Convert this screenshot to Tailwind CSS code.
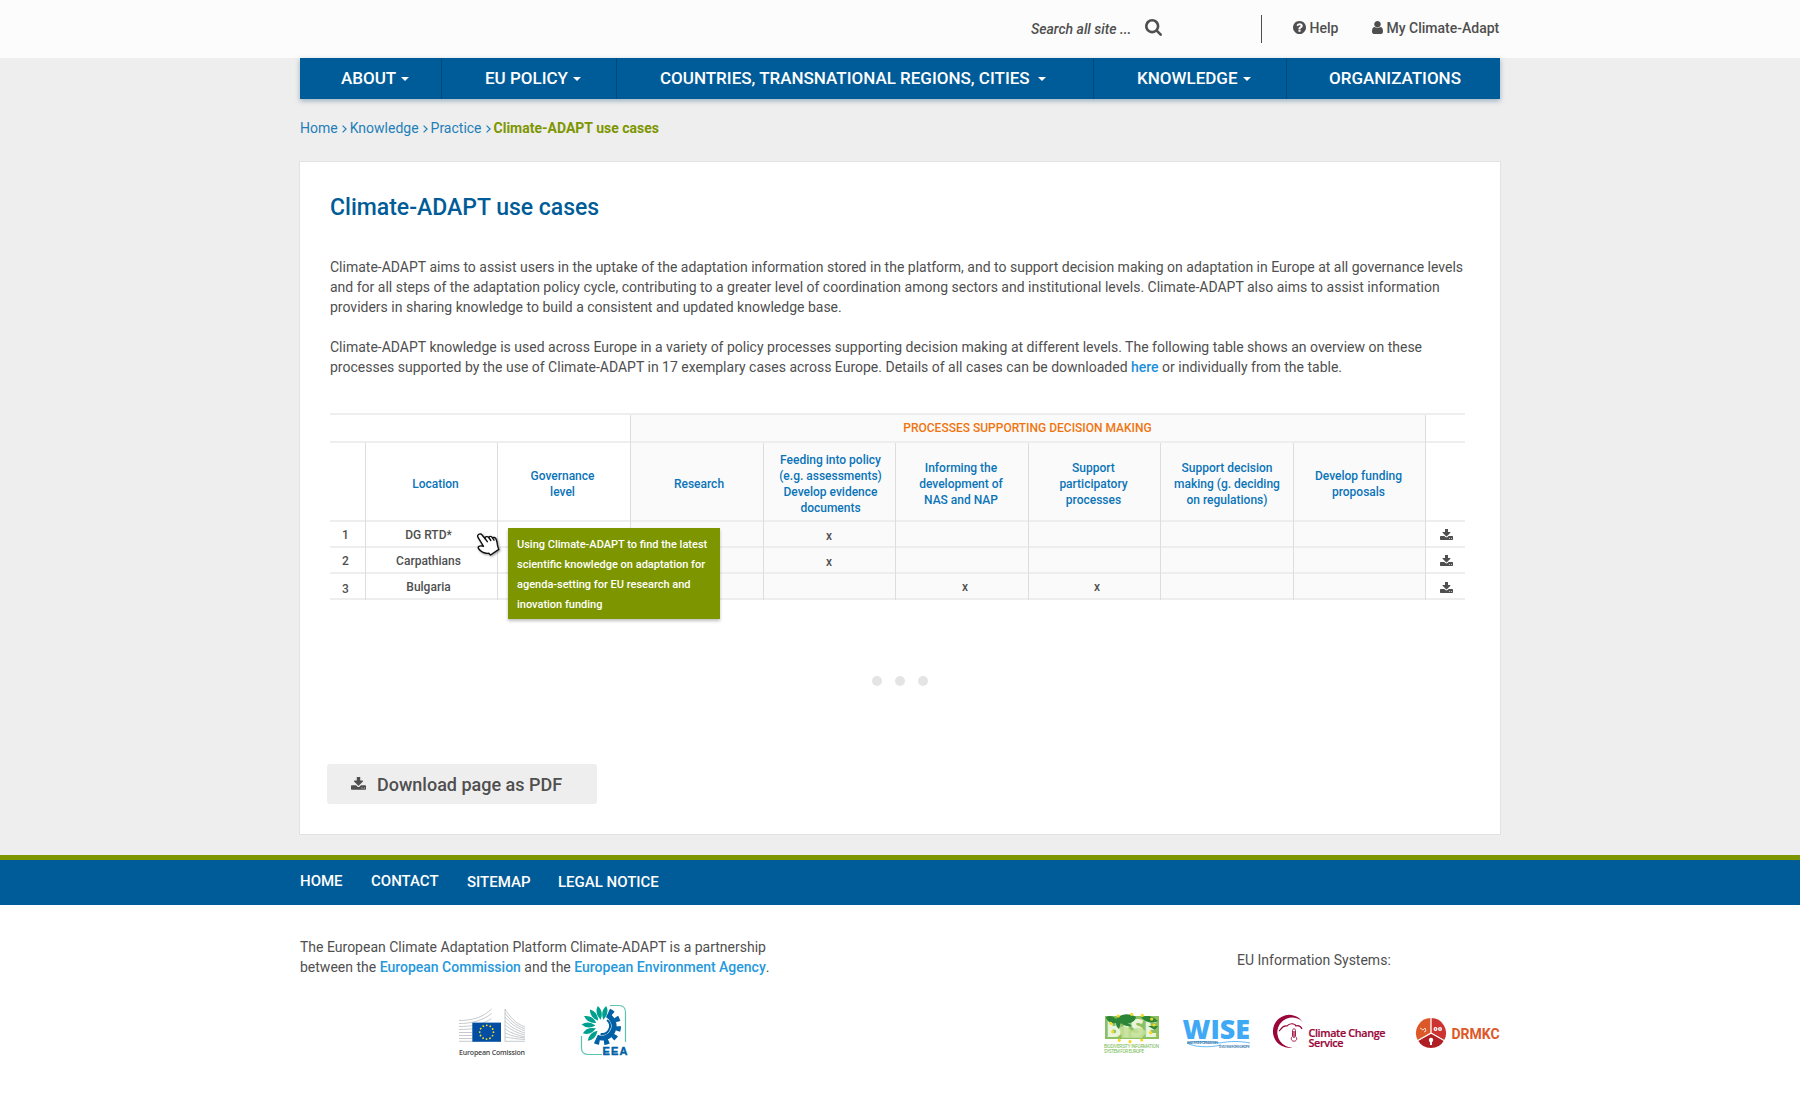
<!DOCTYPE html>
<html lang="en">
<head>
<meta charset="utf-8">
<title>Climate-ADAPT use cases</title>
<script src="https://cdn.jsdelivr.net/npm/@tailwindcss/browser@4"></script>
</head>
<body class="w-[1800px] overflow-x-hidden bg-white font-[Roboto,sans-serif] text-sm text-[#4f4f4f]">
<svg class="hidden">
  <symbol id="download" viewBox="64 128 1664 1536"><path d="M1344 1344q0-26-19-45t-45-19-45 19-19 45 19 45 45 19 45-19 19-45zm256 0q0-26-19-45t-45-19-45 19-19 45 19 45 45 19 45-19 19-45zm128-224v320q0 40-28 68t-68 28h-1472q-40 0-68-28t-28-68v-320q0-40 28-68t68-28h465l135 136q58 56 136 56t136-56l136-136h464q40 0 68 28t28 68zm-325-569q17 41-14 70l-448 448q-18 19-45 19t-45-19l-448-448q-31-29-14-70 17-39 59-39h256v-448q0-26 19-45t45-19h256q26 0 45 19t19 45v448h256q42 0 59 39z"/></symbol>
</svg>

<header class="flex h-[58px] bg-[#fcfcfc]">
  <div class="mx-auto flex w-[1200px] justify-end font-medium">
    <div class="flex w-[230px] pt-[19px]">
      <span class="w-[114px] italic leading-5">Search all site ...</span>
      <svg class="h-[17px] w-[17px]" viewBox="0 128 1664 1664" fill="currentColor"><path d="M1152 832q0-185-131.500-316.500t-316.500-131.500-316.500 131.500-131.500 316.500 131.500 316.500 316.500 131.500 316.500-131.500 131.500-316.500zm512 832q0 52-38 90t-90 38q-54 0-90-38l-343-342q-179 124-399 124-143 0-273.500-55.500t-225-150-150-225-55.500-273.500 55.500-273.500 150-225 225-150 273.500-55.500 273.500 55.500 225 150 150 225 55.500 273.500q0 220-124 399l343 343q37 37 37 90z"/></svg>
    </div>
    <div class="mt-[15px] h-7 w-px bg-[#4f4f4f]"></div>
    <div class="flex w-[110px] pl-[31px] pt-[18px] leading-5">
      <svg class="mt-[3px] mr-[3.500px] h-[13px] w-[13px]" viewBox="128 128 1536 1536" fill="currentColor"><path d="M1024 1376v-192q0-14-9-23t-23-9h-192q-14 0-23 9t-9 23v192q0 14 9 23t23 9h192q14 0 23-9t9-23zm256-672q0-88-55.500-163t-138.500-116-170-41q-243 0-371 213-15 24 8 42l132 100q7 6 19 6 16 0 25-12 53-68 86-92 34-24 86-24 48 0 85.500 26t37.500 59q0 38-20 61t-68 45q-63 28-115.500 86.500t-52.500 125.500v36q0 14 9 23t23 9h192q14 0 23-9t9-23q0-19 21.500-49.500t54.500-49.500q32-18 49-28.500t46-35 44.500-48 28-60.500 12.500-81zm384 192q0 209-103 385.500t-279.500 279.500-385.500 103-385.500-103-279.500-279.500-103-385.500 103-385.500 279.500-279.500 385.500-103 385.500 103 279.500 279.500 103 385.500z"/></svg>
      <span>Help</span>
    </div>
    <div class="flex w-[128px] pt-[18px] leading-5">
      <svg class="mt-[3px] mr-[3.500px] h-[13px] w-[11px]" viewBox="256 128 1280 1536" fill="currentColor" preserveAspectRatio="none"><path d="M1536 1399q0 109-62.500 187t-150.500 78h-854q-88 0-150.500-78t-62.500-187q0-85 8.500-160.500t31.500-152 58.500-131 94-89 134.500-34.500q131 128 313 128t313-128q76 0 134.500 34.500t94 89 58.500 131 31.500 152 8.500 160.500zm-256-887q0 159-112.500 271.500t-271.500 112.500-271.500-112.500-112.500-271.500 112.500-271.500 271.500-112.500 271.500 112.500 112.500 271.500z"/></svg>
      <span class="whitespace-nowrap">My Climate-Adapt</span>
    </div>
  </div>
</header>

<main class="h-[797px] bg-[#eeeeee]">
  <nav class="mx-auto flex h-[41px] w-[1200px] bg-[#005c98] text-[17px] font-medium leading-[41px] text-white shadow-[0_2px_5px_rgba(0,60,100,0.35)]">
    <a class="flex w-[142px] items-center border-r border-[#004878] pl-[41px]">ABOUT<i class="ml-[5px] border-x-4 border-t-4 border-x-transparent"></i></a>
    <a class="flex w-[175px] items-center border-r border-[#004878] pl-[43px]">EU POLICY<i class="ml-[5px] border-x-4 border-t-4 border-x-transparent"></i></a>
    <a class="flex w-[477px] items-center whitespace-nowrap border-r border-[#004878] pl-[43px]">COUNTRIES, TRANSNATIONAL REGIONS, CITIES<i class="ml-[8px] border-x-4 border-t-4 border-x-transparent"></i></a>
    <a class="flex w-[193px] items-center border-r border-[#004878] pl-[43px]">KNOWLEDGE<i class="ml-[5px] border-x-4 border-t-4 border-x-transparent"></i></a>
    <a class="flex flex-1 items-center pl-[42px]">ORGANIZATIONS</a>
  </nav>

  <div class="mx-auto mt-[19px] flex h-5 w-[1200px] leading-5 text-[#1f7fb8]">
    <span>Home</span><svg class="ml-[4px] mr-[3px] mt-[7px] h-2 w-[5px]" viewBox="0 0 5 8" fill="none" stroke="currentColor" stroke-width="1.200"><path d="M.6.6 4.100 4 .6 7.400"/></svg>
    <span>Knowledge</span><svg class="ml-[4px] mr-[3px] mt-[7px] h-2 w-[5px]" viewBox="0 0 5 8" fill="none" stroke="currentColor" stroke-width="1.200"><path d="M.6.6 4.100 4 .6 7.400"/></svg>
    <span>Practice</span><svg class="ml-[4px] mr-[3px] mt-[7px] h-2 w-[5px]" viewBox="0 0 5 8" fill="none" stroke="currentColor" stroke-width="1.200"><path d="M.6.6 4.100 4 .6 7.400"/></svg>
    <b class="text-[#7d9600]">Climate-ADAPT use cases</b>
  </div>

  <section class="mx-auto mt-[23px] h-[674px] w-[1202px] border border-[#e2e2e2] bg-white pl-[30px]">
    <h1 class="mt-[32px] h-7 text-[23px] font-medium leading-7 text-[#005c98]">Climate-ADAPT use cases</h1>
    <p class="mt-[35px] whitespace-nowrap leading-5">Climate-ADAPT aims to assist users in the uptake of the adaptation information stored in the platform, and to support decision making on adaptation in Europe at all governance levels<br>and for all steps of the adaptation policy cycle, contributing to a greater level of coordination among sectors and institutional levels. Climate-ADAPT also aims to assist information<br>providers in sharing knowledge to build a consistent and updated knowledge base.</p>
    <p class="mt-5 whitespace-nowrap leading-5">Climate-ADAPT knowledge is used across Europe in a variety of policy processes supporting decision making at different levels. The following table shows an overview on these<br>processes supported by the use of Climate-ADAPT in 17 exemplary cases across Europe. Details of all cases can be downloaded <a class="font-medium text-[#1d8fdb]">here</a> or individually from the table.</p>

    <div class="relative mt-[36px] w-[1135px] border-t-2 border-[#eeeeee] text-center text-xs font-medium leading-4">
      <div class="grid h-7 grid-cols-[300px_795px_40px] border-b-2 border-[#eeeeee]">
        <div></div>
        <div class="relative bg-[#fafafa] pt-[5px] text-[#f0750f] before:absolute before:left-0 before:top-0 before:-bottom-[2px] before:w-px before:bg-[#dddddd]">PROCESSES SUPPORTING DECISION MAKING</div>
        <div class="relative before:absolute before:left-0 before:top-0 before:-bottom-[2px] before:w-px before:bg-[#dddddd]"></div>
      </div>
      <div class="grid h-[79px] grid-cols-[35px_132px_133px_133px_132px_133px_132px_133px_132px_40px] border-b-2 border-[#eeeeee] text-[#0a74b8] [&>div]:flex [&>div]:items-center [&>div]:justify-center [&>div]:relative [&>div]:pt-[5px] [&>div+div]:before:absolute [&>div+div]:before:left-0 [&>div+div]:before:top-0 [&>div+div]:before:-bottom-[2px] [&>div+div]:before:w-px [&>div+div]:before:bg-[#dddddd]">
        <div></div>
        <div class="pl-[9px]">Location</div>
        <div class="pr-[2px]">Governance<br>level</div>
        <div class="bg-[#fafafa] pl-[5px]">Research</div>
        <div class="bg-[#fafafa] pl-[3px]">Feeding into policy<br>(e.g. assessments)<br>Develop evidence<br>documents</div>
        <div class="bg-[#fafafa] pr-[1px]">Informing the<br>development of<br>NAS and NAP</div>
        <div class="bg-[#fafafa] pr-[1px]">Support<br>participatory<br>processes</div>
        <div class="bg-[#fafafa] pl-[1px]">Support decision<br>making (g. deciding<br>on regulations)</div>
        <div class="bg-[#fafafa] pr-[1px]">Develop funding<br>proposals</div>
        <div></div>
      </div>
      <div class="[&>div]:grid [&>div]:h-[26px] [&>div]:grid-cols-[35px_132px_133px_133px_132px_133px_132px_133px_132px_40px] [&>div]:border-b-2 [&>div]:border-[#eeeeee] [&>div>div]:relative [&>div>div+div]:before:absolute [&>div>div+div]:before:left-0 [&>div>div+div]:before:top-0 [&>div>div+div]:before:-bottom-[2px] [&>div>div+div]:before:w-px [&>div>div+div]:before:bg-[#dddddd]">
        <div>
          <div class="pr-[4px] pt-[5px]">1</div><div class="pt-[5px] pr-[5px]">DG RTD*</div><div></div><div class="bg-[#fafafa]"></div><div class="bg-[#fafafa] pt-[6px]">x</div><div class="bg-[#fafafa]"></div><div class="bg-[#fafafa]"></div><div class="bg-[#fafafa]"></div><div class="bg-[#fafafa]"></div>
          <div class="pl-[15px] pt-[7px]"><svg class="h-3 w-[13px] fill-[#4f4f4f]"><use href="#download"/></svg></div>
        </div>
        <div>
          <div class="pr-[4px] pt-[5px]">2</div><div class="pt-[5px] pr-[5px]">Carpathians</div><div></div><div class="bg-[#fafafa]"></div><div class="bg-[#fafafa] pt-[6px]">x</div><div class="bg-[#fafafa]"></div><div class="bg-[#fafafa]"></div><div class="bg-[#fafafa]"></div><div class="bg-[#fafafa]"></div>
          <div class="pl-[15px] pt-[7px]"><svg class="h-3 w-[13px] fill-[#4f4f4f]"><use href="#download"/></svg></div>
        </div>
        <div>
          <div class="pr-[4px] pt-[7px]">3</div><div class="pt-[5px] pr-[5px]">Bulgaria</div><div></div><div class="bg-[#fafafa]"></div><div class="bg-[#fafafa]"></div><div class="bg-[#fafafa] pt-[5px] pl-[7px]">x</div><div class="bg-[#fafafa] pt-[5px] pl-[6px]">x</div><div class="bg-[#fafafa]"></div><div class="bg-[#fafafa]"></div>
          <div class="pl-[15px] pt-[8px]"><svg class="h-3 w-[13px] fill-[#4f4f4f]"><use href="#download"/></svg></div>
        </div>
      </div>
      <div class="absolute left-[178px] top-[113px] h-[91px] w-[212px] whitespace-nowrap bg-[#7d9600] pl-[9px] pt-[7px] text-left text-[11px] leading-5 text-white shadow-[0_2px_3px_rgba(0,0,0,0.25)]">Using Climate-ADAPT to find the latest<br>scientific knowledge on adaptation for<br>agenda-setting for EU research and<br>inovation funding</div>
      <svg class="absolute left-[146px] top-[117px] h-[26px] w-[26px] drop-shadow-[1px_1px_1px_rgba(0,0,0,0.4)]" viewBox="-1 -1 26 26" fill="#fff" stroke="#111" stroke-width="1.400" stroke-linejoin="round" stroke-linecap="round"><path d="M1.500 1.500C3 .3 4.500 1 5.200 2.200L8 5.500C8 3.500 10.300 3 11.800 4.500 12.300 3 14.500 3 15.500 4.800 16.500 4 18.300 4.300 19 6L20 9C20.500 11.500 20 13 21.800 16.300L13.500 22 11.800 20.300C8.500 20.600 4 19 1.500 15.500.5 13.800 2.500 12.500 5 13L6.500 13.300 1.200 4.600C.4 3.400.5 2.300 1.500 1.500z"/><path fill="none" d="m8 5.500 2.300 3.200m1.500-4.200 2 3m1.700-2.700 1.500 2.400"/></svg>
    </div>

    <div class="mt-[76px] flex justify-center gap-[13px] pr-[30px]">
      <i class="h-[10px] w-[10px] rounded-full bg-[#e4e4e4]"></i><i class="h-[10px] w-[10px] rounded-full bg-[#e4e4e4]"></i><i class="h-[10px] w-[10px] rounded-full bg-[#e4e4e4]"></i>
    </div>

    <a class="-ml-[3px] mt-[78px] flex h-10 w-[270px] items-center rounded-[3px] bg-[#eeeeee] pl-[24px] text-lg font-medium"><svg class="mr-[11px] h-[14px] w-[15px] fill-[#4f4f4f]"><use href="#download"/></svg><span class="pt-[2px]">Download page as PDF</span></a>
  </section>
</main>

<footer>
  <div class="h-[50px] border-t-[5px] border-[#7d9600] bg-[#005c98]">
    <div class="mx-auto flex w-[1200px] pt-[11px] text-[15px] font-medium leading-5 text-white"><a class="w-[71px]">HOME</a><a class="w-[96px]">CONTACT</a><a class="w-[91px] pt-px">SITEMAP</a><a class="pt-px">LEGAL NOTICE</a></div>
  </div>
  <div class="mx-auto flex w-[1200px] justify-between">
    <div class="pt-[32px]">
      <p class="leading-5">The European Climate Adaptation Platform Climate-ADAPT is a partnership<br>between the <a class="font-medium text-[#2699dc]">European Commission</a> and the <a class="font-medium text-[#2699dc]">European Environment Agency</a>.</p>
      <div class="flex pl-[158px] pt-[27px]">
        <svg class="mt-[3px] h-[52px] w-[70px]" viewBox="0 0 70 52">
          <g fill="none" stroke="#b9bcc0" stroke-width=".8"><path d="M1 13.500C14 13.500 25 10.500 33.500 2M1 16.500c13 0 24-3 32.500-10M1 19.500c13 0 24-2 32.500-8M1 22.500c13 0 24-2 32.500-6M1 25.500h13M1 28.500h13M1 31.500h13M1 34.300h13"/><path d="M47 2c5 8 10 14 20 18M47 6c5 7 10 12 20 16M47 10c5 6 10 10 20 14M47 14c5 5 10 9 20 12M47 18c6 5 12 8 20 10M47 22c6 4 12 6 20 8M47 26c6 3 12 4 20 5M47 30c6 1 12 2 20 2.500M47 34.300h20M47 2v32.500"/></g>
          <rect x="14.300" y="15.600" width="28.700" height="19.200" fill="#034ea2"/>
          <circle cx="28.600" cy="25.200" r="6.900" fill="none" stroke="#ffe617" stroke-width="1.800" stroke-linecap="round" stroke-dasharray=".01 3.603"/>
          <text x="1" y="47.700" font-family="Open Sans, sans-serif" font-size="7" font-weight="600" fill="#444" textLength="66">European Comission</text>
        </svg>
        <svg class="ml-[50px] h-[54px] w-[50px]" viewBox="0 0 50 54">
          <path d="M32 1.500h9q6.500 0 6.500 7V38M3.500 32v12q0 6.500 7 6.500H24" fill="none" stroke="#5cc3b4" stroke-width="1.200"/>
          <g transform="translate(24 22)">
            <path d="M5.100-10.900A12 12 0 0 1-5.100 10.900" fill="none" stroke="#0060a5" stroke-width="5"/>
            <path d="M7-15A16.500 16.500 0 0 1-7 15" fill="none" stroke="#0060a5" stroke-width="5" stroke-dasharray="4.800 4.600"/>
            <path d="M5.100-6.100A8 8 0 0 1-1.400 7.900" fill="none" stroke="#0060a5" stroke-width="2"/>
            <g fill="#00a08f" transform="rotate(-12)"><path id="petal" d="M0-6.500Q-5-14 0-20.500 5-14 0-6.500z"/><use href="#petal" transform="rotate(24)"/><use href="#petal" transform="rotate(-24)"/><use href="#petal" transform="rotate(-49)"/><use href="#petal" transform="rotate(-74)"/><use href="#petal" transform="rotate(-99)"/><use href="#petal" transform="rotate(-124)"/></g>
          </g>
          <rect x="24" y="41" width="26" height="12" fill="#fff"/>
          <text x="24.500" y="51" font-family="Liberation Sans, sans-serif" font-weight="700" font-size="11" fill="#0060a5" stroke="#0060a5" stroke-width=".4" textLength="25">EEA</text>
        </svg>
      </div>
    </div>
    <div class="w-[398px] pt-[45px]">
      <p class="pl-[135px] leading-5">EU Information Systems:</p>
      <div class="flex pt-[42px]">
        <svg class="h-[44px] w-[80px] overflow-visible" viewBox="0 0 80 44">
          <rect x="3" y="4" width="54" height="23" fill="#8dc063"/>
          <text x="4" y="25" font-family="Open Sans, sans-serif" font-weight="800" font-size="25" fill="#e9f4da" textLength="51" lengthAdjust="spacingAndGlyphs">BISE</text>
          <path d="M4 5c4-2 7-1 10 2 5-6 14-6 20-2-1 4-4 6-8 6l4 3c-5 1-9-1-11-3l-2 6c-2-2-3-3-3-6-4 1-9-1-10-6zM39 5c6-2 12-1 17 4-6 3-12 2-17-4zM46 14h10l-3 4z" fill="#2c8638"/>
          <path d="M17 16c5-3 10-1 13 3 4-5 9-4 15 1l-5 6H20z" fill="#c3df96" opacity=".85"/>
          <path d="m29.700 2.300.01 0M40.300 3.300h.01M49.700 7h.01M52 13h.01M48.700 20.700h.01M39.700 28h.01M28 29.700h.01M17.300 28.300h.01M10.700 19.700h.01M8.700 11.300h.01M16.300 4h.01" fill="none" stroke="#f5d81f" stroke-width="3.200" stroke-linecap="round"/>
          <g font-family="Roboto, sans-serif" font-size="4.600" fill="#76b852"><text x="2" y="36.300" textLength="55">BIODIVERSITY INFORMATION</text><text x="2" y="41.300" textLength="40">SYSTEM FOR EUROPE</text></g>
        </svg>
        <svg class="h-[44px] w-[90px] overflow-visible" viewBox="0 0 90 44">
          <text x=".5" y="26.800" font-family="Open Sans, sans-serif" font-weight="800" font-size="27" fill="#3fa9f5" textLength="67.500" lengthAdjust="spacingAndGlyphs">WISE</text>
          <path d="M5 31c10-3 24-1 33 0 10-2 20-2 30 0M5 31c6 4 22 5 34 2" fill="none" stroke="#3fa9f5" stroke-width=".8"/>
          <g font-family="Roboto, sans-serif" font-size="3.800" font-weight="500" fill="#3576ad"><text x="5" y="31.500" textLength="31">WATER INFORMATION</text><text x="37" y="35.500" textLength="31">SYSTEM FOR EUROPE</text></g>
        </svg>
        <svg class="h-[44px] w-[142px]" viewBox="0 0 142 44">
          <path d="M31 10A16.500 16.500 0 1 0 21 35.500 15 15 0 1 1 31 10z" fill="#99063a"/>
          <path d="M7 19c2-1 3-6 8-5 2-3 8-3 9 0 3-1 5 1 6 3" fill="none" stroke="#99063a" stroke-width="1.200"/>
          <path d="M20.500 18.500c0-2.200 3-2.200 3 0v6c2.500 2 .9 4.700-1.500 4.700s-4-2.700-1.500-4.700z" fill="none" stroke="#99063a" stroke-width=".9"/><path d="M22 19v7" stroke="#99063a" stroke-width="1.200"/>
          <g font-family="Open Sans, sans-serif" font-weight="600" font-size="10.800" fill="#99063a" stroke="#99063a" stroke-width=".2"><text x="36.500" y="24.500" textLength="77">Climate Change</text><text x="36.500" y="35" textLength="35">Service</text></g>
        </svg>
        <svg class="h-[44px] w-[86px]" viewBox="0 0 86 44">
          <path d="M17 21V6A15 15 0 0 0 4 28.500z" fill="#dd5828"/><path d="M17 21V6a15 15 0 0 1 13 22.500z" fill="#cc3331"/><path d="M17 21 4 28.500a15 15 0 0 0 26 0z" fill="#b01f24"/>
          <path d="M17 5v16L3 29M17 21l14 8" fill="none" stroke="#fff" stroke-width="1.300"/>
          <path d="m6 16 3 2 2-2 1 3-2 1" fill="none" stroke="#fbd9c8" stroke-width="1"/><g fill="#fff"><circle cx="21.500" cy="17" r="2"/><circle cx="26" cy="17" r="2"/><circle cx="17" cy="28" r="2.200"/><path d="M16 29h2v4h-2z"/></g><g fill="#cc3331"><circle cx="21.500" cy="17" r=".7"/><circle cx="26" cy="17" r=".7"/></g>
          <text x="37.500" y="27" font-family="Roboto, sans-serif" font-weight="700" font-size="14" fill="#dd5828">DRMKC</text>
        </svg>
      </div>
    </div>
  </div>
</footer>
</body>
</html>
